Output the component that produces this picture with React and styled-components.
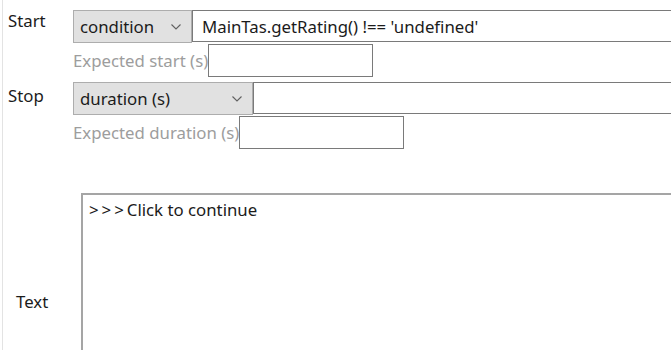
import React from "react";
import styled, { createGlobalStyle } from "styled-components";

const GlobalStyle = createGlobalStyle`
  html, body {
    margin: 0;
    padding: 0;
    background: #fff;
    overflow: hidden;
  }
  body {
    font-family: "Noto Sans", "Open Sans", sans-serif;
    font-size: 16.8px;
    color: #1b1b1b;
  }
`;

const Page = styled.div`
  width: 671px;
  height: 350px;
  overflow: hidden;
  border-left: 1px solid #e3e3e3;
  margin-left: 2px;
  box-sizing: border-box;
  padding-top: 10px;
`;

const Row = styled.div`
  display: flex;
  align-items: flex-start;
`;

const Label = styled.div`
  width: ${(p) => p.$width || 70}px;
  flex: none;
  padding-left: ${(p) => p.$indent || 5}px;
  padding-top: ${(p) => p.$top || 1}px;
  box-sizing: border-box;
  line-height: 20px;
`;

const Fields = styled.div`
  flex: 1;
  min-width: 0;
  display: flex;
  flex-direction: column;
  gap: 1px;
  margin-bottom: ${(p) => p.$after || 0}px;
`;

const Line = styled.div`
  display: flex;
  align-items: flex-start;
`;

const Select = styled.div`
  width: ${(p) => p.$width}px;
  height: 33px;
  flex: none;
  box-sizing: border-box;
  background: #e1e1e1;
  border: 1px solid #adadad;
  display: flex;
  align-items: center;
  justify-content: space-between;
  padding: 0 10px 0 6px;
`;

const Chevron = () => (
  <svg width="10" height="6" viewBox="0 0 10 6">
    <polyline points="0.5,0.5 5,5 9.5,0.5" fill="none" stroke="#606060" strokeWidth="1.1" />
  </svg>
);

const TextInput = styled.input`
  flex: 1;
  min-width: 0;
  height: 32px;
  margin: 0;
  box-sizing: border-box;
  border: 1px solid #7a7a7a;
  border-right: none;
  outline: none;
  padding: 0 9px;
  font: inherit;
  color: #1b1b1b;
  background: #fff;
`;

const Hint = styled.span`
  color: #9d9d9d;
  line-height: 33px;
`;

const SmallInput = styled.input`
  width: 165px;
  height: 33px;
  margin: 0;
  box-sizing: border-box;
  border: 1px solid #7a7a7a;
  outline: none;
  padding: 0 6px;
  font: inherit;
  background: #fff;
`;

const TextRow = styled.div`
  display: flex;
  align-items: center;
  margin-top: 44px;
`;

const TextArea = styled.div`
  flex: 1;
  height: 216px;
  box-sizing: border-box;
  border-top: 2px solid #a5a5a5;
  border-left: 2px solid #a5a5a5;
  padding: 5px 6px;
  line-height: 20px;
`;

const Prompt = styled.span`
  letter-spacing: 3px;
`;

const App = () => {
  return (
    <>
      <GlobalStyle />
      <Page>
        <Row>
          <Label>Start</Label>
          <Fields $after={5}>
            <Line>
              <Select $width={119}>
                condition
                <Chevron />
              </Select>
              <TextInput readOnly value="MainTas.getRating() !== 'undefined'" />
            </Line>
            <Line>
              <Hint>Expected start (s)</Hint>
              <SmallInput readOnly value="" />
            </Line>
          </Fields>
        </Row>
        <Row>
          <Label $top={4}>Stop</Label>
          <Fields>
            <Line>
              <Select $width={180}>
                duration (s)
                <Chevron />
              </Select>
              <TextInput readOnly value="" />
            </Line>
            <Line>
              <Hint>Expected duration (s)</Hint>
              <SmallInput readOnly value="" />
            </Line>
          </Fields>
        </Row>
        <TextRow>
          <Label $width={78} $indent={13}>Text</Label>
          <TextArea>
            <Prompt>&gt;&gt;&gt;</Prompt>Click to continue
          </TextArea>
        </TextRow>
      </Page>
    </>
  );
};

export default App;
